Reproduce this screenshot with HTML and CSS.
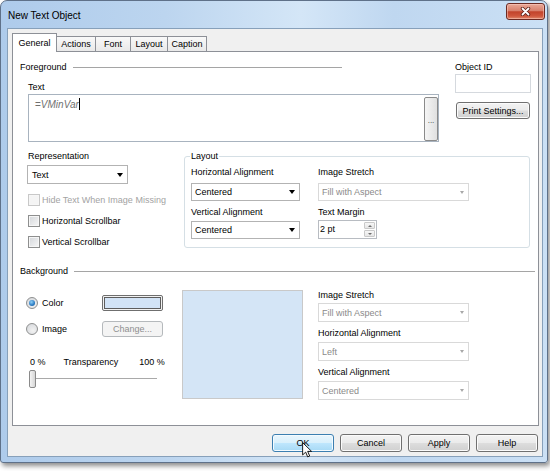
FILE: index.html
```html
<!DOCTYPE html>
<html>
<head>
<meta charset="utf-8">
<title>New Text Object</title>
<link rel="stylesheet" href="styles.css">
</head>
<body>
<div class="window">
  <div class="titlebar">
    <span class="title">New Text Object</span>
    <div class="close">
      <svg width="11" height="9" viewBox="0 0 11 9"><path d="M2.5 1.5 L8.5 7.5 M8.5 1.5 L2.5 7.5" stroke="#5a2118" stroke-width="3.4" stroke-linecap="round"/><path d="M2.5 1.5 L8.5 7.5 M8.5 1.5 L2.5 7.5" stroke="#fff" stroke-width="1.8" stroke-linecap="round"/></svg>
    </div>
  </div>
  <div class="client">
    <div class="tabs">
      <div class="tab active t-gen">General</div>
      <div class="tab t-act">Actions</div>
      <div class="tab t-font">Font</div>
      <div class="tab t-lay">Layout</div>
      <div class="tab t-cap">Caption</div>
    </div>
    <div class="panel">
      <div class="row-top">
        <div class="fg">
          <div class="sect-head w-fg"><span>Foreground</span><i></i></div>
          <div class="lbl ind text-lbl">Text</div>
          <div class="textbox">
            <div class="expr">=<em>VMinVar</em><span class="caret"></span></div>
            <div class="dots">...</div>
          </div>
        </div>
        <div class="oid">
          <div class="lbl">Object ID</div>
          <div class="idbox"></div>
          <div class="btn print">Print Settings...</div>
        </div>
      </div>

      <div class="row-mid">
        <div class="rep">
          <div class="lbl">Representation</div>
          <div class="combo rep-combo"><span>Text</span><b class="arr"></b></div>
          <div class="check dis first"><span class="box"></span>Hide Text When Image Missing</div>
          <div class="check"><span class="box"></span>Horizontal Scrollbar</div>
          <div class="check"><span class="box"></span>Vertical Scrollbar</div>
        </div>
        <fieldset class="layout">
          <legend>Layout</legend>
          <div class="cols">
            <div class="col1">
              <div class="lbl">Horizontal Alignment</div>
              <div class="combo c-a"><span>Centered</span><b class="arr"></b></div>
              <div class="lbl l-b">Vertical Alignment</div>
              <div class="combo c-b"><span>Centered</span><b class="arr"></b></div>
            </div>
            <div class="col2">
              <div class="lbl">Image Stretch</div>
              <div class="combo c-a dis"><span>Fill with Aspect</span><b class="arr"></b></div>
              <div class="lbl l-b">Text Margin</div>
              <div class="spin">
                <span class="spin-val">2 pt</span>
                <div class="spin-btns">
                  <div class="sb"><b class="up"></b></div>
                  <div class="sb"><b class="down"></b></div>
                </div>
              </div>
            </div>
          </div>
        </fieldset>
      </div>

      <div class="sect-head w-bg"><span>Background</span><i></i></div>

      <div class="row-bg">
        <div class="bgleft">
          <div class="radio-row">
            <div class="radio on"><span class="circle"><span class="dot"></span></span>Color</div>
            <div class="swatch"><div class="swatch-in"></div></div>
          </div>
          <div class="radio-row r2">
            <div class="radio"><span class="circle"></span>Image</div>
            <div class="btn dis change">Change...</div>
          </div>
          <div class="trans">
            <span class="t0">0 %</span>
            <span class="t1">Transparency</span>
            <span class="t2">100 %</span>
          </div>
          <div class="slider"><div class="thumb"></div></div>
        </div>
        <div class="preview"></div>
        <div class="bgright">
          <div class="lbl">Image Stretch</div>
          <div class="combo c-r dis"><span>Fill with Aspect</span><b class="arr"></b></div>
          <div class="lbl l-r">Horizontal Alignment</div>
          <div class="combo c-r2 dis"><span>Left</span><b class="arr"></b></div>
          <div class="lbl l-r">Vertical Alignment</div>
          <div class="combo c-r2 dis"><span>Centered</span><b class="arr"></b></div>
        </div>
      </div>
    </div>

    <div class="buttons">
      <div class="btn def">OK
        <svg class="cursor" width="10" height="16" viewBox="0 0 12.5 20"><path d="M0.8 0.8 L0.8 16.2 L4.6 12.6 L7.1 18.6 L9.6 17.5 L7.1 11.7 L12 11.7 Z" fill="#fff" stroke="#000" stroke-width="1.1" stroke-linejoin="round"/></svg>
      </div>
      <div class="btn">Cancel</div>
      <div class="btn">Apply</div>
      <div class="btn">Help</div>
    </div>
  </div>
</div>
</body>
</html>
```

FILE: styles.css
```css
* { box-sizing: border-box; }

body {
  margin: 0;
  width: 550px;
  height: 471px;
  overflow: hidden;
  background: #ffffff;
  font-family: "Liberation Sans", Arial, sans-serif;
  font-size: 9px;
  color: #000;
}

.window {
  position: relative;
  width: 548px;
  height: 463px;
  border: 1px solid #5f7189;
  border-radius: 7px 7px 3px 3px;
  background:
    linear-gradient(90deg, #aecbeb 0%, #bcd5ef 30%, #d4e6f7 55%, #bfd7f0 72%, #cbe0f5 100%);
  box-shadow: 2px 3px 5px rgba(0, 0, 0, 0.45);
  display: flex;
  flex-direction: column;
  padding: 0 4px 5px 6px;
}

.titlebar {
  height: 27px;
  display: flex;
  justify-content: space-between;
  align-items: center;
}

.title {
  padding-left: 1px;
  font-size: 10px;
  color: #000;
  margin-top: 2px;
}

.close {
  align-self: flex-start;
  margin-top: 2px;
  margin-right: -2px;
  width: 39px;
  height: 17px;
  border: 1px solid #6b2a22;
  border-radius: 3px;
  background: linear-gradient(#e9a897 0%, #d8806c 45%, #c2432b 52%, #cf563c 80%, #e08a6c 100%);
  display: flex;
  align-items: center;
  justify-content: center;
  box-shadow: inset 0 0 0 1px rgba(255, 210, 200, 0.5);
}

.client {
  flex: 1;
  background: #f0f0f0;
  border: 1px solid #87a0ba;
  padding: 4px 3px 0 4px;
  display: flex;
  flex-direction: column;
}

/* tabs */
.tabs {
  height: 18px;
  display: flex;
  align-items: flex-end;
}

.tab {
  height: 15px;
  line-height: 14px;
  text-align: center;
  border: 1px solid #8d9097;
  border-bottom: none;
  background: linear-gradient(#f9f9f9, #e9e9e9);
  margin-left: -1px;
  color: #000;
}

.t-gen { width: 45px; margin-left: 0; }
.t-act { width: 39px; }
.t-font { width: 36px; }
.t-lay { width: 38px; }
.t-cap { width: 40px; }

.tab.active {
  position: relative;
  z-index: 1;
  height: 19px;
  line-height: 18px;
  margin-bottom: -1px;
  background: #fff;
}

.tab.active + .tab { border-left: none; margin-left: 0; }

.panel {
  height: 375px;
  background: #fff;
  border: 1px solid #8d9097;
  padding: 9px 3px 0 7px;
}

.lbl {
  height: 12px;
  line-height: 12px;
  white-space: nowrap;
}

.sect-head {
  display: flex;
  align-items: center;
  height: 12px;
  line-height: 12px;
}

.sect-head i {
  flex: 1;
  height: 0;
  border-top: 1px solid #a5a5a5;
  margin-left: 6px;
}

.w-fg { width: 322px; }
.w-bg { width: 515px; margin-top: 17px; }

/* top row */
.row-top {
  display: flex;
  gap: 15px;
}

.fg { width: 420px; }

.ind { margin-left: 8px; }
.text-lbl { margin-top: 8px; }

.textbox {
  margin: 1px 0 0 8px;
  width: 411px;
  height: 48px;
  border: 1px solid #a8b3bf;
  background: #fff;
  display: flex;
  justify-content: space-between;
}

.expr {
  padding: 3px 0 0 6px;
  line-height: 12px;
  color: #707070;
  font-size: 10px;
}

.expr em { font-style: italic; }

.caret {
  display: inline-block;
  width: 1px;
  height: 12px;
  background: #000;
  vertical-align: -2px;
}

.dots {
  width: 14px;
  height: 44px;
  margin-top: 2px;
  border: 1px solid #8a8a8a;
  border-radius: 2px;
  background: linear-gradient(90deg, #f5f5f5, #e0e0e0);
  display: flex;
  align-items: center;
  justify-content: center;
  font-size: 8px;
  color: #333;
  padding-top: 3px;
}

.oid { width: 76px; }

.idbox {
  margin-top: 1px;
  height: 19px;
  border: 1px solid #d5d9de;
  background: #fff;
}

/* buttons */
.btn {
  width: 62px;
  height: 18px;
  border: 1px solid #707070;
  border-radius: 3px;
  background: linear-gradient(#f3f3f3 0%, #ebebeb 48%, #dddddd 52%, #d0d0d0 100%);
  box-shadow: inset 0 0 0 1px #fbfbfb;
  display: flex;
  align-items: center;
  justify-content: center;
  white-space: nowrap;
  color: #000;
}

.print {
  width: 74px;
  height: 17px;
  margin: 9px 0 0 1px;
}

.btn.dis {
  border-color: #b5b9bc;
  background: #f4f4f4;
  box-shadow: none;
  color: #8f8f8f;
}

.btn.def {
  position: relative;
  border-color: #3c7fb1;
  background: linear-gradient(#eaf6fd 0%, #d9f0fc 48%, #bee6fd 52%, #a7d9f5 100%);
  box-shadow: inset 0 0 0 1px #f4fbff;
}

.cursor {
  position: absolute;
  left: 29px;
  top: 7px;
}

/* middle row */
.row-mid {
  display: flex;
  margin-top: 8px;
}

.rep {
  width: 164px;
  padding-left: 8px;
}

.combo {
  height: 18px;
  border: 1px solid #b3b3b3;
  background: #fff;
  display: flex;
  align-items: center;
  justify-content: space-between;
  padding: 0 3px 0 3px;
  color: #000;
  white-space: nowrap;
}

.combo .arr {
  width: 0;
  height: 0;
  border-left: 3px solid transparent;
  border-right: 3px solid transparent;
  border-top: 4px solid #000;
  margin-right: 1px;
}

.combo.dis {
  border-color: #d9d9d9;
  color: #8a8a8a;
}

.combo.dis .arr {
  border-top-color: #a8a8a8;
  border-left-width: 2.5px;
  border-right-width: 2.5px;
  border-top-width: 3px;
}

.rep-combo {
  width: 101px;
  height: 19px;
  margin: 3px 0 0 -1px;
  padding-left: 4px;
}

.check {
  display: flex;
  align-items: center;
  height: 13px;
  margin-top: 8px;
  white-space: nowrap;
}

.check.first { margin-top: 9px; }

.check .box {
  width: 12px;
  height: 12px;
  margin-right: 2px;
  border: 1px solid #8e8f8f;
  background: linear-gradient(135deg, #d3d6da 0%, #f7f7f7 100%);
  box-shadow: inset 0 0 0 1px #f6f6f6;
}

.check.dis { color: #a3a3a3; }

.check.dis .box {
  border-color: #c8c8c8;
  background: #f4f4f4;
}

fieldset.layout {
  margin: 0;
  width: 346px;
  padding: 4px 0 8px 6px;
  border: 1px solid #d5dfe5;
  border-radius: 3px;
}

fieldset.layout legend {
  padding: 0 1px;
  margin-left: -1px;
  height: 12px;
  line-height: 12px;
}

.cols {
  display: flex;
  gap: 18px;
}

.col1 { width: 109px; }
.col2 { width: 151px; }

.c-a { margin-top: 5px; }
.c-b { margin-top: 3px; }
.l-b { margin-top: 5px; }

.spin {
  margin-top: 2px;
  width: 59px;
  height: 19px;
  border: 1px solid #b8bcc2;
  background: #fff;
  display: flex;
  justify-content: space-between;
}

.spin-val {
  padding: 2px 0 0 1px;
  line-height: 12px;
}

.spin-btns {
  width: 11px;
  margin: 1px 1px 1px 0;
  display: flex;
  flex-direction: column;
  gap: 1px;
}

.sb {
  flex: 1;
  border: 1px solid #c9c9c9;
  border-radius: 1px;
  background: linear-gradient(#f7f7f7, #e6e6e6);
  display: flex;
  align-items: center;
  justify-content: center;
}

.sb .up, .sb .down {
  width: 0;
  height: 0;
  border-left: 2px solid transparent;
  border-right: 2px solid transparent;
}

.sb .up { border-bottom: 2px solid #6d6d6d; }
.sb .down { border-top: 2px solid #6d6d6d; }

/* background section */
.row-bg {
  display: flex;
  align-items: flex-start;
  margin-top: 13px;
}

.bgleft {
  width: 162px;
  padding: 5px 0 0 8px;
}

.radio-row {
  display: flex;
  align-items: center;
  height: 16px;
}

.radio-row.r2 { margin-top: 10px; }

.radio {
  width: 74px;
  display: flex;
  align-items: center;
  margin-left: -2px;
  padding-right: 0;
}

.radio-row .radio + * { margin-left: 2px; }

.circle {
  width: 12px;
  height: 12px;
  border-radius: 50%;
  border: 1px solid #8e8f8f;
  background: radial-gradient(circle at 60% 65%, #f2f2f2 0%, #d3d6da 100%);
  margin-right: 4px;
  display: flex;
  align-items: center;
  justify-content: center;
}

.dot {
  width: 6px;
  height: 6px;
  border-radius: 50%;
  background: radial-gradient(circle at 40% 35%, #8fd0f7 0%, #2a7ac2 60%, #124f8c 100%);
}

.swatch {
  width: 61px;
  height: 16px;
  border: 1px solid #6f6f6f;
  border-radius: 2px;
  background: #f2f2f2;
  padding: 1px;
}

.swatch-in {
  width: 100%;
  height: 100%;
  border: 1px solid #5d5d5d;
  background: #d2e3f6;
}

.change {
  width: 61px;
  height: 16px;
}

.trans {
  display: flex;
  height: 12px;
  line-height: 12px;
  margin-top: 19px;
  white-space: nowrap;
}

.t0 { margin-left: 2px; }
.t1 { margin-left: 18px; }
.t2 { margin-left: 21px; }

.slider {
  width: 129px;
  height: 18px;
  margin: 2px 0 0 1px;
  background: linear-gradient(#a9a9a9, #a9a9a9) no-repeat 3px 8px / 125px 1px;
}

.thumb {
  width: 7px;
  height: 18px;
  border: 1px solid #8a8a8a;
  border-radius: 2px;
  background: linear-gradient(90deg, #f4f4f4, #d6d6d6);
}

.preview {
  width: 121px;
  height: 109px;
  border: 1px solid #c9c9c9;
  background: #d4e5f6;
}

.bgright {
  width: 151px;
  margin: -1px 0 0 15px;
}

.c-r { height: 19px; margin-top: 2px; }
.c-r2 { height: 19px; margin-top: 3px; }
.l-r { margin-top: 5px; }

/* bottom buttons */
.buttons {
  display: flex;
  justify-content: flex-end;
  gap: 6px;
  margin: 8px 1px 0 0;
}
```
